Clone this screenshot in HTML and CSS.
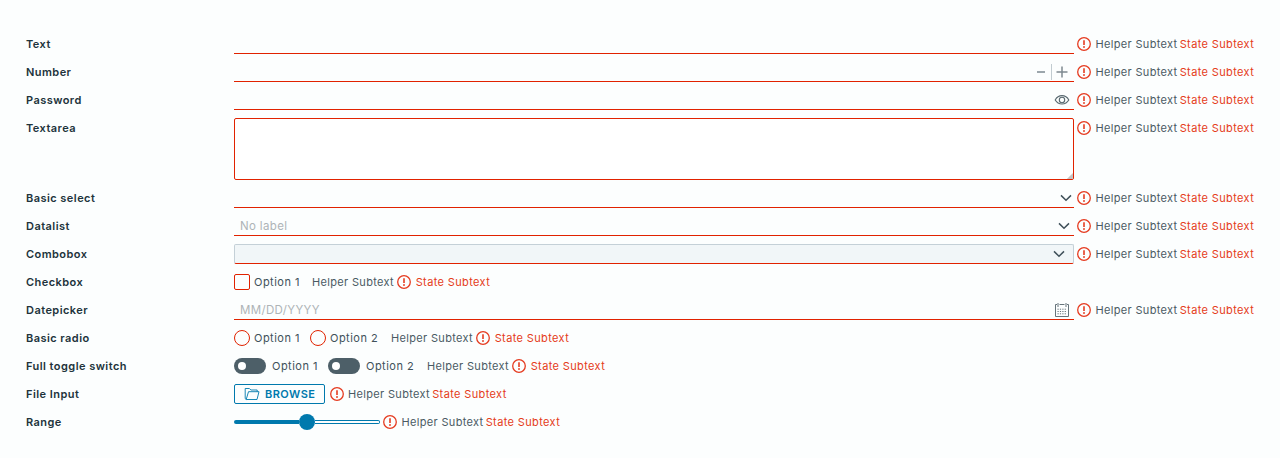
FILE: index.html
```html
<!DOCTYPE html>
<html lang="en">
<head>
<meta charset="utf-8">
<title>Form controls</title>
<link rel="stylesheet" href="styles.css">
</head>
<body>
<svg class="defs" width="0" height="0">
  <symbol id="error" viewBox="0 0 16 16"><circle cx="8" cy="8" r="6.3" fill="none" stroke="currentColor" stroke-width="1.3"/><path d="M8 4.2v4.8" stroke="currentColor" stroke-width="1.6"/><circle cx="8" cy="11" r=".95" fill="currentColor"/></symbol>
  <symbol id="chevron" viewBox="0 0 12 8"><path d="M1 1.4l5 4.8 5-4.8" fill="none" stroke="currentColor" stroke-width="1.5"/></symbol>
</svg>
<form class="form">
  <div class="row"><label class="label">Text</label><div class="control input"></div><svg class="error"><use href="#error"/></svg><span class="helper">Helper Subtext</span><span class="state">State Subtext</span></div>
  <div class="row"><label class="label">Number</label><div class="control input number">
    <svg class="step" viewBox="0 0 12 12"><path d="M2 6h8"/></svg><span class="divider"></span><svg class="step" viewBox="0 0 12 12"><path d="M.5 6h11M6 .5v11"/></svg>
  </div><svg class="error"><use href="#error"/></svg><span class="helper">Helper Subtext</span><span class="state">State Subtext</span></div>
  <div class="row"><label class="label">Password</label><div class="control input password">
    <svg class="eye" viewBox="0 0 16 12"><path d="M1.2 6C4.3.2 11.7.2 14.8 6 11.7 11.3 4.3 11.3 1.2 6z"/><circle cx="8" cy="6" r="2.7"/></svg>
  </div><svg class="error"><use href="#error"/></svg><span class="helper">Helper Subtext</span><span class="state">State Subtext</span></div>
  <div class="row"><label class="label">Textarea</label><div class="control textarea"><svg class="grip" viewBox="0 0 8 8"><path d="M1 8l7-7v7z"/></svg></div><svg class="error"><use href="#error"/></svg><span class="helper">Helper Subtext</span><span class="state">State Subtext</span></div>
  <div class="row"><label class="label">Basic select</label><div class="control input select"><svg class="chevron"><use href="#chevron"/></svg></div><svg class="error"><use href="#error"/></svg><span class="helper">Helper Subtext</span><span class="state">State Subtext</span></div>
  <div class="row"><label class="label">Datalist</label><div class="control input datalist"><span class="placeholder nolabel">No label</span><svg class="chevron"><use href="#chevron"/></svg></div><svg class="error"><use href="#error"/></svg><span class="helper">Helper Subtext</span><span class="state">State Subtext</span></div>
  <div class="row"><label class="label">Combobox</label><div class="control combobox"><svg class="chevron"><use href="#chevron"/></svg></div><svg class="error"><use href="#error"/></svg><span class="helper">Helper Subtext</span><span class="state">State Subtext</span></div>
  <div class="row"><label class="label">Checkbox</label><span class="check"></span><span class="option first">Option 1</span><span class="helper tight">Helper Subtext</span><svg class="error"><use href="#error"/></svg><span class="state">State Subtext</span></div>
  <div class="row"><label class="label">Datepicker</label><div class="control input date"><span class="placeholder">MM/DD/YYYY</span>
    <svg class="calendar" viewBox="0 0 16 16"><path d="M3 2.5H1.5v12h13v-12H13M5.5 2.5h5M4 1v4M12 1v4"/><path class="days" d="M3.5 7.2h9M3.5 9.5h9M3.5 11.8h9"/></svg>
  </div><svg class="error"><use href="#error"/></svg><span class="helper">Helper Subtext</span><span class="state">State Subtext</span></div>
  <div class="row"><label class="label">Basic radio</label><span class="check radio"></span><span class="option middle">Option 1</span><span class="check radio"></span><span class="option last">Option 2</span><span class="helper tight">Helper Subtext</span><svg class="error"><use href="#error"/></svg><span class="state">State Subtext</span></div>
  <div class="row"><label class="label">Full toggle switch</label><span class="toggle"></span><span class="option middle">Option 1</span><span class="toggle"></span><span class="option last">Option 2</span><span class="helper tight">Helper Subtext</span><svg class="error"><use href="#error"/></svg><span class="state">State Subtext</span></div>
  <div class="row"><label class="label">File Input</label><div class="browse"><svg class="folder" viewBox="0 0 16 14"><path d="M2.2 12.5H13l2-7.8H4.5L2.2 12.5zM2.2 12.5L1.2 11.6V1.5h4.2L6.9 3h6.3v1.7"/></svg><span>BROWSE</span></div><svg class="error"><use href="#error"/></svg><span class="helper">Helper Subtext</span><span class="state">State Subtext</span></div>
  <div class="row"><label class="label">Range</label><div class="range"><span class="fill"></span><span class="thumb"></span><span class="track"></span></div><svg class="error"><use href="#error"/></svg><span class="helper">Helper Subtext</span><span class="state">State Subtext</span></div>
</form>
</body>
</html>
```
FILE: styles.css
```css
* { box-sizing: border-box; }
body {
  margin: 0;
  background: #fcfefe;
  color: #4a5a63;
  font: 11px/20px Inter, "Liberation Sans", sans-serif;
}
.defs { display: block; }
.form { display: flex; flex-direction: column; gap: 8px; padding: 34px 26px 26px; }
.row { display: flex; align-items: flex-start; min-height: 20px; white-space: nowrap; }
.label { flex: 0 0 208px; color: #21333b; font-weight: 600; letter-spacing: .45px; }
.control { flex: 0 0 840px; height: 20px; display: flex; align-items: center; justify-content: flex-end; }
.input { border-bottom: 1px solid #e12200; }
.error { flex: 0 0 16px; width: 16px; height: 16px; margin: 2px 3px 0 2px; color: #e53b20; }
.helper { flex: 0 0 84px; padding-left: .5px; letter-spacing: .33px; }
.state { flex: 0 0 75px; padding-left: .7px; color: #e53b20; letter-spacing: .37px; }
.helper.tight { flex-basis: 83px; padding-left: 0; }
.tight + .error { margin-left: 1px; }
.browse + .error { margin-left: 4px; margin-right: 2.5px; }
.chevron { width: 12px; height: 8px; color: #40515a; }
.number { gap: 4px; padding-right: 6px; }
.step { width: 12px; height: 12px; stroke: #7d8990; stroke-width: 1.5; }
.divider { width: 1px; height: 16px; background: #c1cbd0; }
.password { padding-right: 4px; }
.eye { width: 16px; height: 12px; fill: none; stroke: #596970; stroke-width: 1.1; }
.textarea { height: 62px; background: #fff; border: 1px solid #e12200; border-radius: 2px; align-items: flex-end; }
.grip { width: 7px; height: 7px; fill: #c4c4c4; }
.select { padding-right: 2px; }
.datalist { padding-right: 4px; }
.placeholder { margin-right: auto; padding-left: 6px; color: #aeb4b7; font-size: 11.5px; letter-spacing: .35px; }
.combobox { padding-right: 8px; background: #f1f6f8; border: 1px solid #c4d0d7; border-bottom-color: #e12200; border-radius: 2px; }
.check { flex: 0 0 16px; height: 16px; margin: 2px 4px 0 0; border: 1px solid #e12200; border-radius: 2px; }
.radio { border-radius: 50%; }
.option { color: #40515a; letter-spacing: .48px; }
.first { flex: 0 0 58px; }
.middle { flex: 0 0 56px; }
.last { flex: 0 0 61px; }
.date { padding-right: 4px; }
.calendar { width: 16px; height: 16px; fill: none; stroke: #65737a; stroke-width: 1; }
.days { stroke-dasharray: 1.2 1.2; }
.toggle { display: flex; align-items: center; flex: 0 0 32px; height: 16px; margin: 2px 6px 0 0; padding-left: 4px; border-radius: 8px; background: #4d5f68; }
.toggle::before { content: ""; width: 8px; height: 8px; border-radius: 50%; background: #fff; }
.browse { display: flex; align-items: center; flex: 0 0 91px; height: 20px; padding-left: 9px; gap: 5px; border: 1px solid #0079ad; border-radius: 2px; color: #0079ad; font-weight: 600; line-height: 18px; letter-spacing: .45px; }
.folder { width: 16px; height: 14px; fill: none; stroke: #0079ad; stroke-width: .9; }
.range { display: flex; align-items: center; flex: 0 0 146px; height: 20px; }
.fill { width: 65px; height: 4px; background: #0079ad; border-radius: 2px 0 0 2px; }
.thumb { width: 16px; height: 16px; border-radius: 50%; background: #0079ad; }
.track { flex: 1; height: 4px; border: 1px solid #0079ad; border-left: 0; border-radius: 0 2px 2px 0; }
.range + .error { margin-right: 3px; }
```
